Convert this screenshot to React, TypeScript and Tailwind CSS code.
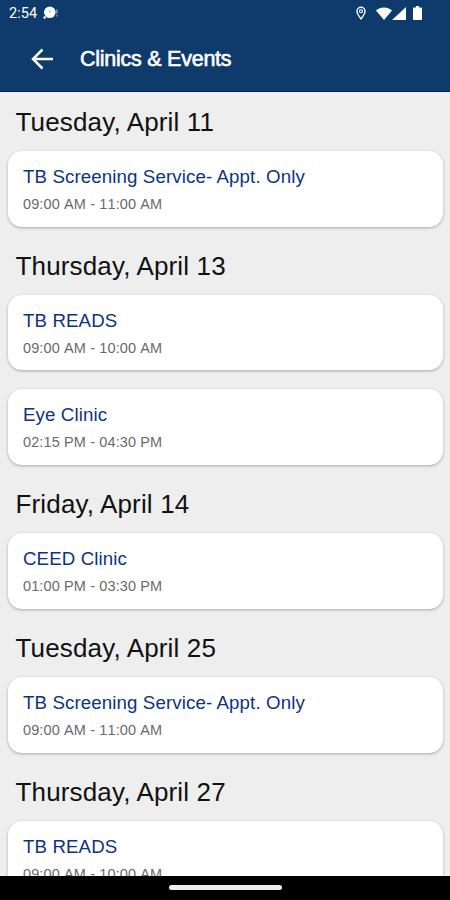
type ClinicEvent = {
  title: string
  time: string
}

type Day = {
  date: string
  events: ClinicEvent[]
}

const days: Day[] = [
  {
    date: 'Tuesday, April 11',
    events: [{ title: 'TB Screening Service- Appt. Only', time: '09:00 AM - 11:00 AM' }],
  },
  {
    date: 'Thursday, April 13',
    events: [
      { title: 'TB READS', time: '09:00 AM - 10:00 AM' },
      { title: 'Eye Clinic', time: '02:15 PM - 04:30 PM' },
    ],
  },
  {
    date: 'Friday, April 14',
    events: [{ title: 'CEED Clinic', time: '01:00 PM - 03:30 PM' }],
  },
  {
    date: 'Tuesday, April 25',
    events: [{ title: 'TB Screening Service- Appt. Only', time: '09:00 AM - 11:00 AM' }],
  },
  {
    date: 'Thursday, April 27',
    events: [{ title: 'TB READS', time: '09:00 AM - 10:00 AM' }],
  },
]

function StatusBar() {
  return (
    <div className="flex h-[26px] items-center pl-[9px] pr-[28px] text-white">
      <span className="pt-[2px] font-[Roboto,sans-serif] text-[14.5px] leading-none tracking-[0.1px]">2:54</span>
      {/* Notification bubble */}
      <svg className="ml-[6px] h-[14px] w-[16px]" viewBox="0 0 16 14" fill="currentColor">
        <circle cx="6.8" cy="6.3" r="5.8" />
        <circle cx="1.7" cy="11.5" r="1.3" />
        <path d="M5 4.800h3.600L6.800 7.300z" fill="#b8c8da" />
        <path d="M13.200 3.500h1.300v4.300h-1.300zM13.200 9h1.300v1.400h-1.300z" opacity=".55" />
      </svg>
      <div className="ml-auto flex items-center">
        {/* Location */}
        <svg className="mr-[10px] h-[14px] w-[10px]" viewBox="0 0 10 14" fill="none" stroke="currentColor">
          <path d="M5 12.800C3.200 10.400 1 7.800 1 5.200a4 4 0 0 1 8 0c0 2.600-2.200 5.200-4 7.600z" strokeWidth="1.4" />
          <circle cx="5" cy="5.2" r="1.5" strokeWidth="1.1" />
        </svg>
        {/* Wifi */}
        <svg className="h-[13px] w-[16px]" viewBox="0 0 17 13" preserveAspectRatio="none" fill="currentColor">
          <path d="M0 3.600C5-.7 12-.7 17 3.600L8.500 13z" />
        </svg>
        {/* Signal */}
        <svg className="h-[13px] w-[14px]" viewBox="0 0 14 13" fill="currentColor">
          <path d="M14 0v13H0z" />
        </svg>
        {/* Battery */}
        <svg className="ml-[7px] h-[14px] w-[9px]" viewBox="0 0 9 14" fill="currentColor">
          <path d="M3 0h3v1.500h2.200c.5 0 .8.3.8.8v10.900c0 .5-.3.8-.8.8H.8c-.5 0-.8-.3-.8-.8V2.300c0-.5.3-.8.8-.8H3z" />
        </svg>
      </div>
    </div>
  )
}

function EventCard({ title, time }: ClinicEvent) {
  return (
    <div className="mb-[19px] h-[75.75px] rounded-[14px] bg-white px-[15px] pt-[14px] shadow-[0_1px_3px_rgba(0,0,0,0.3)]">
      <div className="h-6 whitespace-nowrap text-[18.7px] leading-6 tracking-[0.11px] text-[#0b3485]">{title}</div>
      <div className="mt-[5px] whitespace-nowrap text-[14.5px] leading-5 tracking-[0.12px] text-[#6a6a6a] [font-kerning:none]">
        {time}
      </div>
    </div>
  )
}

export default function App() {
  return (
    <div className="flex h-[900px] w-[450px] flex-col overflow-hidden bg-[#eeeeee] font-['Liberation_Sans',Arial,sans-serif]">
      <header className="h-[92px] shrink-0 border-b border-[#0a1d5c] bg-[#0e3b6c]">
        <StatusBar />
        <div className="flex h-[66px] items-center pl-[31px] text-white">
          <svg className="h-[22px] w-[23px]" viewBox="0 0 23 22" fill="none" stroke="currentColor" strokeWidth="2.5">
            <path d="M22 11H2M11.500 1.500 2 11l9.500 9.500" />
          </svg>
          <h1 className="ml-[26px] whitespace-nowrap pt-[2px] text-[21.5px] font-normal leading-none tracking-[-0.25px] [-webkit-text-stroke:0.6px_white]">
            Clinics &amp; Events
          </h1>
        </div>
      </header>

      <main className="min-h-0 flex-1 overflow-hidden pl-2 pr-[7px] pt-[9.75px]">
        {days.map((day) => (
          <section key={day.date}>
            <h2 className="h-[49px] whitespace-nowrap pl-[7.5px] pt-[3.25px] text-[26px] leading-[34px] tracking-[0.15px] text-[#111111]">
              {day.date}
            </h2>
            {day.events.map((event) => (
              <EventCard key={event.title} title={event.title} time={event.time} />
            ))}
          </section>
        ))}
      </main>

      {/* Gesture bar */}
      <div className="flex h-6 shrink-0 justify-center bg-black pt-[9px]">
        <div className="h-[5px] w-[113px] rounded-full bg-[#eeeeee]" />
      </div>
    </div>
  )
}
